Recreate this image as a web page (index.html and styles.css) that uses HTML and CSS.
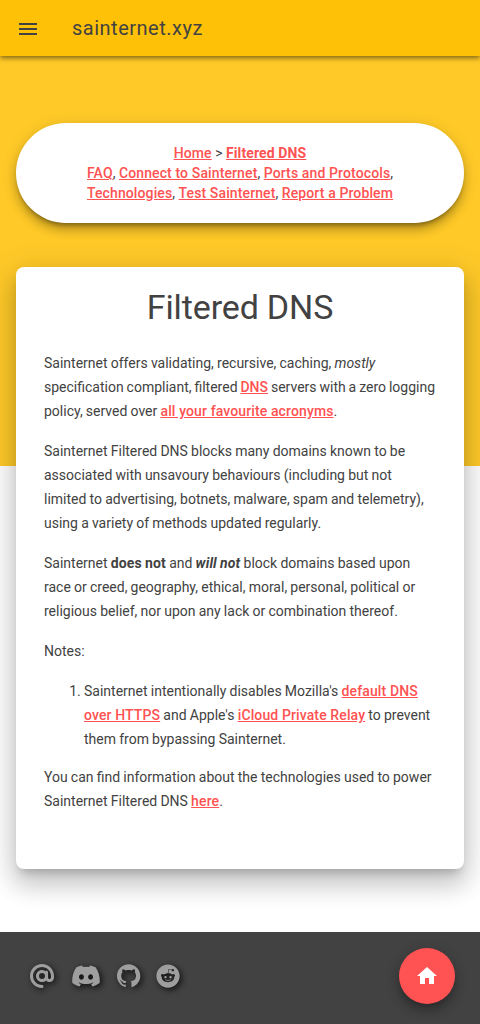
FILE: index.html
```html
<!DOCTYPE html>
<html lang="en">
<head>
<meta charset="utf-8">
<meta name="viewport" content="width=device-width, initial-scale=1">
<title>Filtered DNS</title>
<link rel="stylesheet" href="styles.css">
</head>
<body>
<header class="header">
  <svg class="menu" viewBox="0 0 24 24"><path d="M3 18h18v-2H3v2zm0-5h18v-2H3v2zm0-7v2h18V6H3z"/></svg>
  <span class="site">sainternet.xyz</span>
</header>
<main class="main">
  <nav class="crumbs">
    <a href="#">Home</a> &gt; <a href="#" class="current">Filtered DNS</a><br>
    <a href="#">FAQ</a>, <a href="#">Connect to Sainternet</a>, <a href="#">Ports and Protocols</a>, <a href="#">Technologies</a>, <a href="#">Test Sainternet</a>, <a href="#">Report a Problem</a>
  </nav>
  <article class="card">
    <h1>Filtered DNS</h1>
    <p>Sainternet offers validating, recursive, caching, <em>mostly</em> <span class="tight">specification compliant, filtered <a href="#">DNS</a> servers with a zero logging</span> policy, served over <a href="#">all your favourite acronyms</a>.</p>
    <p>Sainternet Filtered DNS blocks many domains known to be associated with unsavoury behaviours (including but not limited to advertising, botnets, malware, spam and telemetry), using a variety of methods updated regularly.</p>
    <p>Sainternet <strong>does not</strong> and <strong><em>will not</em></strong> block domains based upon race or creed, geography, ethical, moral, personal, political or religious belief, nor upon any lack or combination thereof.</p>
    <p>Notes:</p>
    <ol>
      <li>Sainternet intentionally disables Mozilla's <a href="#">default DNS over HTTPS</a> and Apple's <a href="#">iCloud Private Relay</a> to prevent them from bypassing Sainternet.</li>
    </ol>
    <p>You can find information about the technologies used to power Sainternet Filtered DNS <a href="#">here</a>.</p>
  </article>
</main>
<footer class="footer">
  <div class="social">
    <svg width="24" height="24" viewBox="0 0 512 512"><path d="M256 64C150 64 64 150 64 256s86 192 192 192c17.7 0 32 14.3 32 32s-14.3 32-32 32C114.6 512 0 397.4 0 256S114.6 0 256 0S512 114.6 512 256v32c0 53-43 96-96 96c-29.3 0-55.6-13.2-73.2-33.9C320 371.1 289.5 384 256 384c-70.7 0-128-57.3-128-128s57.3-128 128-128c27.9 0 53.7 8.9 74.7 24.1c5.700-5 13.100-8.100 21.300-8.100c17.700 0 32 14.300 32 32v112c0 17.700 14.300 32 32 32s32-14.300 32-32V256c0-106-86-192-192-192zm64 192a64 64 0 1 0 -128 0 64 64 0 1 0 128 0z"/></svg>
    <svg width="30" height="24" viewBox="0 0 640 512"><path d="M524.531,69.836a1.5,1.5,0,0,0-.764-.7A485.065,485.065,0,0,0,404.081,32.03a1.816,1.816,0,0,0-1.923.91,337.461,337.461,0,0,0-14.9,30.6,447.848,447.848,0,0,0-134.426,0,309.541,309.541,0,0,0-15.135-30.6,1.89,1.89,0,0,0-1.924-.91A483.689,483.689,0,0,0,116.085,69.137a1.712,1.712,0,0,0-.788.676C39.068,183.651,18.186,294.69,28.43,404.354a2.016,2.016,0,0,0,.765,1.375A487.666,487.666,0,0,0,176.02,479.918a1.9,1.9,0,0,0,2.063-.676A348.2,348.2,0,0,0,208.12,430.4a1.86,1.86,0,0,0-1.019-2.588,321.173,321.173,0,0,1-45.868-21.853,1.885,1.885,0,0,1-.185-3.126c3.082-2.309,6.166-4.711,9.109-7.137a1.819,1.819,0,0,1,1.9-.256c96.229,43.917,200.41,43.917,295.5,0a1.812,1.812,0,0,1,1.924.233c2.944,2.426,6.027,4.851,9.132,7.16a1.884,1.884,0,0,1-.162,3.126,301.407,301.407,0,0,1-45.89,21.83,1.875,1.875,0,0,0-1,2.611,391.055,391.055,0,0,0,30.014,48.815,1.864,1.864,0,0,0,2.063.7A486.048,486.048,0,0,0,610.7,405.729a1.882,1.882,0,0,0,.765-1.352C623.729,277.594,590.933,167.465,524.531,69.836ZM222.491,337.58c-28.972,0-52.844-26.587-52.844-59.239S193.056,219.1,222.491,219.1c29.665,0,53.306,26.82,52.843,59.239C275.334,310.993,251.924,337.58,222.491,337.58Zm195.38,0c-28.971,0-52.843-26.587-52.843-59.239S388.437,219.1,417.871,219.1c29.667,0,53.307,26.82,52.844,59.239C470.715,310.993,447.538,337.58,417.871,337.58Z"/></svg>
    <svg width="23.25" height="24" viewBox="0 0 24 24.6"><path d="M12 .297c-6.63 0-12 5.373-12 12 0 5.303 3.438 9.8 8.205 11.385.6.113.82-.258.82-.577 0-.285-.01-1.04-.015-2.04-3.338.724-4.042-1.61-4.042-1.61C4.422 18.07 3.633 17.7 3.633 17.7c-1.087-.744.084-.729.084-.729 1.205.084 1.838 1.236 1.838 1.236 1.07 1.835 2.809 1.305 3.495.998.108-.776.417-1.305.76-1.605-2.665-.3-5.466-1.332-5.466-5.93 0-1.31.465-2.38 1.235-3.22-.135-.303-.54-1.523.105-3.176 0 0 1.005-.322 3.3 1.23.96-.267 1.98-.399 3-.405 1.02.006 2.04.138 3 .405 2.28-1.552 3.285-1.23 3.285-1.23.645 1.653.24 2.873.12 3.176.765.84 1.23 1.91 1.23 3.22 0 4.61-2.805 5.625-5.475 5.92.42.36.81 1.096.81 2.22 0 1.606-.015 2.896-.015 3.286 0 .315.21.69.825.57C20.565 22.092 24 17.592 24 12.297c0-6.627-5.373-12-12-12"/></svg>
    <svg class="reddit" width="24" height="24" viewBox="0 0 512 512"><path d="M201.5 305.5c-13.8 0-24.9-11.1-24.9-24.6 0-13.8 11.1-24.9 24.9-24.9 13.6 0 24.6 11.1 24.6 24.9 0 13.6-11.1 24.6-24.6 24.6zM504 256c0 137-111 248-248 248S8 393 8 256 119 8 256 8s248 111 248 248zm-132.3-41.2c-9.4 0-17.7 3.9-23.8 10-22.4-15.5-52.6-25.5-86.1-26.6l17.4-78.3 55.4 12.5c0 13.6 11.1 24.6 24.6 24.6 13.8 0 24.9-11.3 24.9-24.9s-11.1-24.9-24.9-24.9c-9.7 0-18 5.8-22.1 13.8l-61.2-13.6c-3-.8-6.1 1.4-6.9 4.4l-19.1 86.4c-33.2 1.4-63.1 11.3-85.5 26.8-6.1-6.4-14.7-10.2-24.1-10.2-34.9 0-46.3 46.9-14.4 62.8-1.1 5-1.7 10.2-1.7 15.5 0 52.6 59.2 95.2 132 95.2 73.1 0 132.3-42.6 132.3-95.2 0-5.3-.6-10.8-1.9-15.8 31.3-16 19.8-62.5-14.9-62.5zM302.8 331c-18.2 18.2-76.1 17.9-93.6 0-2.2-2.2-6.1-2.2-8.3 0-2.5 2.5-2.5 6.4 0 8.6 22.8 22.8 87.3 22.8 110.2 0 2.5-2.2 2.5-6.1 0-8.6-2.2-2.2-6.1-2.2-8.3 0zm7.7-75c-13.6 0-24.6 11.1-24.6 24.9 0 13.6 11.1 24.6 24.6 24.6 13.8 0 24.9-11.1 24.9-24.6 0-13.8-11-24.9-24.9-24.9z"/></svg>
  </div>
  <a class="fab" href="#" aria-label="Home"><svg width="24" height="24" viewBox="0 0 24 24"><path d="M10 20v-6h4v6h5v-8h3L12 3 2 12h3v8z"/></svg></a>
</footer>
</body>
</html>
```

FILE: styles.css
```css
* {
  box-sizing: border-box;
}

body {
  margin: 0;
  min-height: 1024px;
  display: flex;
  flex-direction: column;
  background: #fff;
  color: #424242;
  font: 400 14px/24px Roboto, sans-serif;
}

a {
  color: #ff5252;
  font-weight: 500;
  letter-spacing: .12px;
  word-spacing: 0;
}

strong {
  letter-spacing: .12px;
}

.header {
  position: relative;
  height: 56px;
  display: flex;
  align-items: center;
  gap: 32px;
  padding: 0 16px;
  background: #ffc107;
  box-shadow: 0 2px 5px rgba(0, 0, 0, .5);
}

.menu {
  width: 24px;
  height: 24px;
  margin-top: 2px;
  fill: #424242;
}

.site {
  font-size: 20px;
  letter-spacing: .5px;
}

.main {
  height: 876px;
  padding: 67px 16px 0;
  background: linear-gradient(#ffca28 410px, #fff 410px);
}

.crumbs {
  height: 100px;
  padding: 20px 40px;
  border-radius: 50px;
  background: #fff;
  text-align: center;
  line-height: 20px;
  box-shadow: 0 8px 10px 1px rgba(0, 0, 0, .14), 0 3px 14px 2px rgba(0, 0, 0, .12), 0 5px 5px -3px rgba(0, 0, 0, .4);
}

.crumbs .current {
  font-weight: 700;
}

.card {
  height: 602px;
  margin-top: 44px;
  padding: 20px 28px;
  border-radius: 8px;
  background: #fff;
  word-spacing: -.28px;
  box-shadow: 0 16px 24px 2px rgba(0, 0, 0, .14), 0 6px 30px 5px rgba(0, 0, 0, .12), 0 8px 10px -5px rgba(0, 0, 0, .2);
}

.card h1 {
  margin: 0 0 24px;
  font-size: 34px;
  font-weight: 400;
  line-height: 40px;
  letter-spacing: -.1px;
  text-align: center;
}

.card p {
  margin: 0 0 16px;
}

.card ol {
  margin: 16px 0 14px;
  padding-left: 40px;
}

.tight {
  white-space: nowrap;
  word-spacing: -.55px;
}

.tight a {
  letter-spacing: 0;
}

.footer {
  height: 92px;
  display: flex;
  align-items: center;
  justify-content: space-between;
  padding: 0 25px 4px 30px;
  background: #424242;
}

.social {
  display: flex;
  gap: 16.5px;
  fill: #9e9e9e;
}

.social svg {
  filter: drop-shadow(2px 2px 3px rgba(0, 0, 0, .8));
  overflow: visible;
}

.social .reddit {
  margin-left: -.6px;
}

.fab {
  width: 56px;
  height: 56px;
  display: grid;
  place-items: center;
  border-radius: 50%;
  background: #ff5252;
  fill: #fff;
  box-shadow: 0 8px 10px 1px rgba(0, 0, 0, .14), 0 3px 14px 2px rgba(0, 0, 0, .12), 0 5px 5px -3px rgba(0, 0, 0, .2);
}
```
